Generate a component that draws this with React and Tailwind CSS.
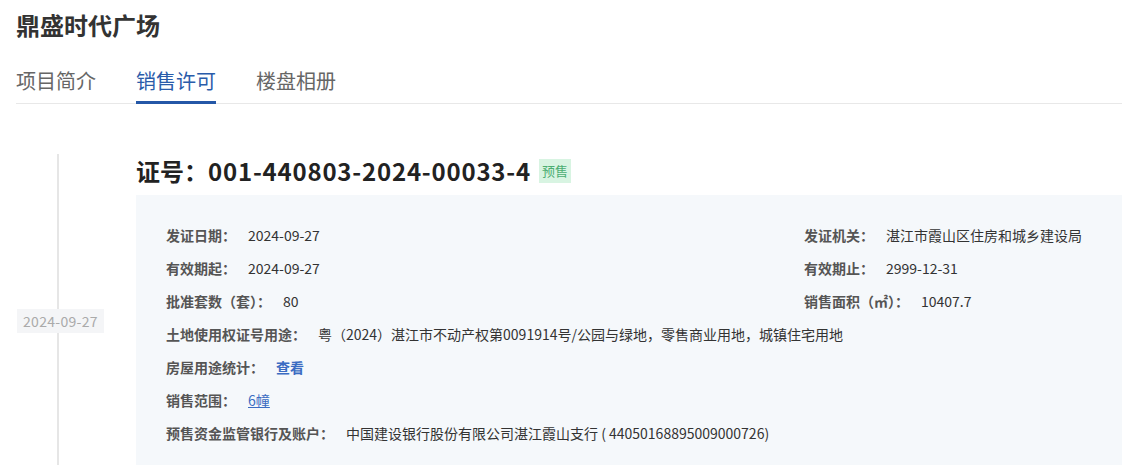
const FONT = { fontFamily: '"Noto Sans CJK SC", "Noto Sans", sans-serif' };

const tabs = ['项目简介', '销售许可', '楼盘相册'];

function Field({ label, children, full }) {
  return (
    <div className={`flex items-center h-[33px] ${full ? 'col-span-2' : ''}`}>
      <span className="text-[14px] font-semibold text-[#555] whitespace-nowrap">{label}</span>
      <span className="ml-3 text-[14px] text-[#333] whitespace-nowrap">{children}</span>
    </div>
  );
}

export default function App() {
  const active = 1;

  return (
    <div className="bg-white w-[1122px] h-[465px] overflow-hidden pl-4" style={FONT}>
      {/* Title */}
      <h1 className="pt-2 text-[24px] leading-[34px] font-bold text-[#333]">鼎盛时代广场</h1>

      {/* Tabs */}
      <div className="mt-[25px] flex gap-10 border-b border-[#e8e8e8]">
        {tabs.map((t, i) => (
          <div
            key={t}
            className={`-mb-px pb-[6px] text-[20px] leading-[28px] border-b-[3px] ${
              i === active ? 'text-[#2a5caa] border-[#2457a7]' : 'text-[#666] border-transparent'
            }`}
          >
            {t}
          </div>
        ))}
      </div>

      {/* Timeline item */}
      <div className="mt-[50px] flex">
        <div className="relative w-[120px] shrink-0 flex items-center">
          <div className="absolute left-[41px] top-0 bottom-0 w-[2px] bg-[#e6e6e6]" />
          <span className="relative mt-[13px] ml-[1px] px-[6px] h-[24px] leading-[24px] bg-[#f4f5f7] text-[14px] text-[#aaa] tracking-[0.3px]">
            2024-09-27
          </span>
        </div>

        <div className="flex-1">
          <div className="flex items-center h-[34px] mb-[7px]">
            <span className="text-[24px] font-bold text-[#222]">
              证号：<span className="tracking-[0.8px]">001-440803-2024-00033-4</span>
            </span>
            <span className="ml-2 px-[3px] h-[24px] leading-[24px] text-[13px] bg-[#d8f4e2] text-[#4cae72]">预售</span>
          </div>

          <div className="bg-[#f5f8fb] pl-[30px] pt-6 pb-6 grid grid-cols-[638px_1fr]">
            <Field label="发证日期：">2024-09-27</Field>
            <Field label="发证机关：">湛江市霞山区住房和城乡建设局</Field>
            <Field label="有效期起：">2024-09-27</Field>
            <Field label="有效期止：">2999-12-31</Field>
            <Field label="批准套数（套）：">80</Field>
            <Field label="销售面积（㎡）：">10407.7</Field>
            <Field label="土地使用权证号用途：" full>
              粤（2024）湛江市不动产权第0091914号/公园与绿地，零售商业用地，城镇住宅用地
            </Field>
            <Field label="房屋用途统计：" full>
              <span className="text-[#3b6cc2] font-semibold">查看</span>
            </Field>
            <Field label="销售范围：" full>
              <span className="text-[#3b6cc2] underline">6幢</span>
            </Field>
            <Field label="预售资金监管银行及账户：" full>
              中国建设银行股份有限公司湛江霞山支行 ( 44050168895009000726)
            </Field>
          </div>
        </div>
      </div>
    </div>
  );
}
